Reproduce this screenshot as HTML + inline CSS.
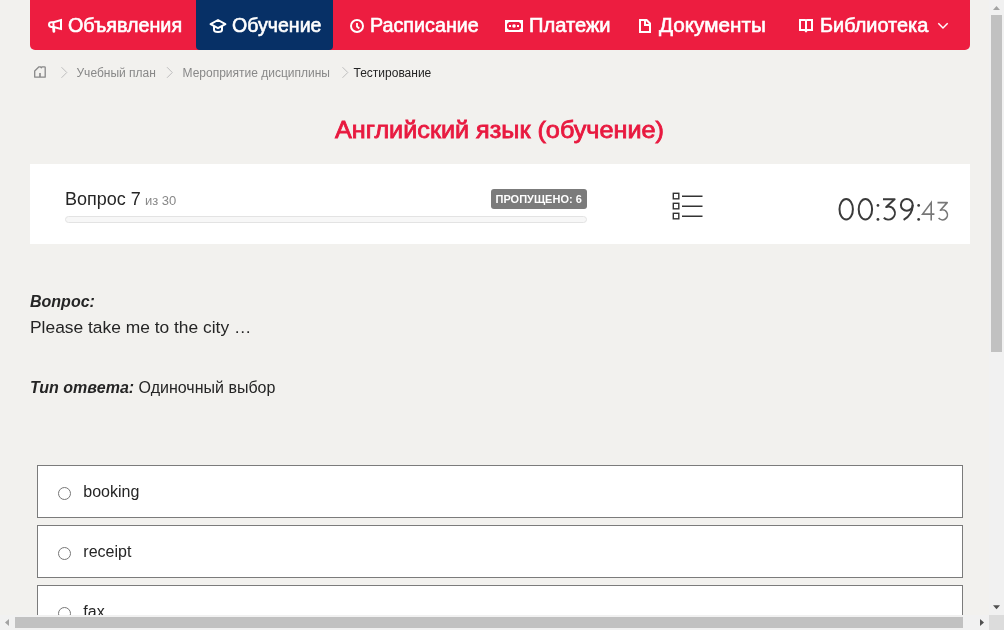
<!DOCTYPE html>
<html><head><meta charset="utf-8">
<style>
html,body{margin:0;padding:0;width:1004px;height:630px;overflow:hidden;background:#f2f1ee;}
body{position:relative;font-family:"Liberation Sans",sans-serif;color:#252525;}
.a{position:absolute;white-space:nowrap;line-height:1;}
#nav{position:absolute;left:30px;top:0;width:940px;height:50px;background:#ed1d40;border-radius:0 0 5px 5px;}
#act{position:absolute;left:196px;top:0;width:137px;height:50px;background:#073066;border-radius:0 0 4px 4px;}
.nt{font-size:20px;color:#fff;-webkit-text-stroke:0.6px #fff;transform-origin:0 0;top:15px;}
.bc{font-size:12px;color:#888;top:66.5px;}
#panel{position:absolute;left:30px;top:164px;width:940px;height:80px;background:#fff;}
.opt{position:absolute;left:37px;width:924px;height:51px;border:1px solid #7b7b7b;background:#fff;}
.radio{position:absolute;width:11px;height:11px;border:1px solid #767676;border-radius:50%;background:#fff;}
.ot{font-size:16px;color:#252525;}
svg{position:absolute;overflow:visible;}
</style></head><body><div style="position:absolute;left:0;top:0;width:1004px;height:630px;will-change:transform">

<div id="nav"></div>
<div id="act"></div>

<!-- nav icons -->
<svg style="left:0;top:0" width="1004" height="50" fill="none" stroke="#fff" stroke-width="2">
  <!-- megaphone -->
  <path d="M53.5 22.2 L61 20 L61 29 L53.5 27 Z"/>
  <path d="M53.5 22.2 L51.5 22.2 Q49 22.2 49 24.6 Q49 27 51.5 27 L53.5 27"/>
  <path d="M53.6 28 L53.9 31.4" stroke-width="2.8" stroke-linecap="round"/>
  <!-- grad cap -->
  <path d="M218 20 L210.6 24.2 L218 28.2 L225.4 24.2 Z" stroke-linejoin="round"/>
  <path d="M214 26 L214 30 Q214 32 218 32 Q222 32 222 30 L222 26"/>
  <!-- clock -->
  <circle cx="357" cy="26" r="6"/>
  <path d="M357 23 L357 26.5 L359.3 28.5" stroke-width="1.8"/>
  <!-- chevron -->
  <path d="M938.3 23.3 L943 28 L947.7 23.3" stroke-width="1.5"/>
</svg>
<svg style="left:0;top:0" width="1004" height="50" fill="#fff">
  <!-- money -->
  <path fill-rule="evenodd" d="M505 20 H523 V32 H505 Z M509 22 H519 L521 24 V28 L519 30 H509 L507 28 V24 Z"/>
  <circle cx="514" cy="26" r="1.8"/>
  <rect x="509" y="25" width="2" height="2"/>
  <rect x="517" y="25" width="2" height="2"/>
  <!-- doc -->
  <path fill-rule="evenodd" d="M639 19 H647 L651 23 V33 H639 Z M641 21 H644 V26 H649 V31 H641 Z M646 21 L649 24 H646 Z"/>
  <!-- book -->
  <path fill-rule="evenodd" d="M799 19 H805.5 L806 19.6 L806.5 19 H813 V31 H807.5 L806 32.8 L804.5 31 H799 Z M801 21 V29 H805 V21 Z M807 21 V29 H811 V21 Z"/>
</svg>

<div class="a nt" id="n1" style="left:68px;transform:scaleX(0.986)">Объявления</div>
<div class="a nt" id="n2" style="left:232px;transform:scaleX(0.978)">Обучение</div>
<div class="a nt" id="n3" style="left:370px;transform:scaleX(0.9865)">Расписание</div>
<div class="a nt" id="n4" style="left:528.8px;transform:scaleX(1.006)">Платежи</div>
<div class="a nt" id="n5" style="left:659px;transform:scaleX(1.036)">Документы</div>
<div class="a nt" id="n6" style="left:820px;transform:scaleX(0.995)">Библиотека</div>

<!-- breadcrumb -->
<svg style="left:0;top:0" width="1004" height="90" fill="none" stroke="#888" stroke-width="1.3">
  <path d="M34.7 77 V71 L39 66.8 H40.3 L41.3 67.7 L42.2 66.8 H44.5 Q45.2 66.8 45.2 67.5 V71 Q45.2 71.5 45.2 72 V77 Q45.2 77.2 45 77.2 H35 Q34.7 77.2 34.7 77 Z" stroke-linejoin="round"/>
  <path d="M40 73 V77" stroke-width="1.6"/>
</svg>
<svg style="left:0;top:0" width="1004" height="90" fill="none" stroke="#bdbdbd" stroke-width="1">
  <path d="M61.5 67.2 L66.8 72.5 L61.5 77.8"/>
  <path d="M167 67.2 L172.3 72.5 L167 77.8"/>
  <path d="M342.5 67.2 L347.8 72.5 L342.5 77.8"/>
</svg>
<div class="a bc" style="left:76.5px">Учебный план</div>
<div class="a bc" style="left:182.5px">Мероприятие дисциплины</div>
<div class="a bc" style="left:353.5px;color:#252525">Тестирование</div>

<!-- title -->
<div class="a" id="title" style="left:335px;top:118.8px;font-size:23.4px;color:#e8193f;-webkit-text-stroke:0.8px #e8193f;transform-origin:0 0;transform:scaleX(1.078)">Английский язык (обучение)</div>

<!-- panel -->
<div id="panel"></div>
<div class="a" style="left:65px;top:190.4px;font-size:18px;color:#252525">Вопрос 7</div>
<div class="a" style="left:145px;top:193.6px;font-size:13px;color:#888">из 30</div>
<div style="position:absolute;left:491px;top:189px;width:96px;height:20px;background:#7b7b7b;border-radius:3px;"></div>
<div class="a" style="left:495.5px;top:194.2px;font-size:11px;font-weight:bold;color:#fff">ПРОПУЩЕНО: 6</div>
<div style="position:absolute;left:65px;top:216px;width:520px;height:5px;background:#f7f7f7;border:1px solid #e3e3e3;border-radius:4px;"></div>

<svg style="left:0;top:0" width="1004" height="250" fill="none" stroke="#333" stroke-width="1.4">
  <rect x="673.3" y="193.3" width="5.5" height="5.5"/>
  <rect x="673.3" y="203.3" width="5.5" height="5.5"/>
  <rect x="673.3" y="213.3" width="5.5" height="5.5"/>
  <path d="M682 196.3 H702.5 M682 206.3 H702.5 M682 216.3 H702.5"/>
</svg>

<svg style="left:0;top:0" width="1004" height="250" fill="none" stroke="#3a3a3a" stroke-width="2">
  <ellipse cx="846.2" cy="209.25" rx="6.7" ry="10.35"/>
  <ellipse cx="865.4" cy="209.25" rx="6.7" ry="10.35"/>
  <path d="M883 199.2 H894.6 L886.2 207 A6.5 6.5 0 1 1 883.8 217.7" stroke-linejoin="round"/>
  <circle cx="906.8" cy="204.9" r="5.9"/>
  <path d="M912.7 205 Q912.5 215 903.6 219.9"/>
  <g fill="#3a3a3a" stroke="none">
    <circle cx="877.95" cy="205.45" r="1.35"/><circle cx="877.95" cy="219.4" r="1.4"/>
    <circle cx="918.65" cy="205.45" r="1.35"/><circle cx="918.65" cy="219.4" r="1.4"/>
  </g>
</svg>
<svg style="left:0;top:0" width="1004" height="250" fill="none" stroke="#777" stroke-width="1.6">
  <path d="M934.4 214.1 H922.6 L931.2 202.6 V220.6"/>
  <path d="M937.5 202.6 H947.2 L940.4 210.3 A5 5 0 1 1 938.6 218.1" stroke-linejoin="round"/>
</svg>

<!-- question -->
<div class="a" style="left:30px;top:293.5px;font-size:16px;font-weight:bold;font-style:italic;color:#252525">Воnрос:</div>
<div class="a" style="left:30px;top:318.6px;font-size:17.4px;color:#252525">Please take me to the city …</div>
<div class="a" style="left:30px;top:380.3px;font-size:16px;color:#252525"><b><i>Тиn omвema:</i></b> Одиночный выбор</div>

<!-- options -->
<div class="opt" style="top:465px"></div>
<div class="radio" style="left:58px;top:487px"></div>
<div class="a ot" style="left:83.3px;top:484px">booking</div>

<div class="opt" style="top:525px"></div>
<div class="radio" style="left:58px;top:547px"></div>
<div class="a ot" style="left:83.3px;top:544px">receipt</div>

<div class="opt" style="top:585px"></div>
<div class="radio" style="left:58px;top:607px"></div>
<div class="a ot" style="left:83.3px;top:604px">fax</div>

<!-- scrollbars -->
<div style="position:absolute;left:989px;top:0;width:15px;height:615px;background:#f1f1f1;"></div>
<div style="position:absolute;left:991px;top:15px;width:11px;height:337px;background:#c1c1c1;"></div>
<div style="position:absolute;left:0;top:615px;width:989px;height:15px;background:#f1f1f1;"></div>
<div style="position:absolute;left:15px;top:617px;width:948px;height:11px;background:#c1c1c1;"></div>
<div style="position:absolute;left:989px;top:615px;width:15px;height:15px;background:#dcdcdc;"></div>
<svg style="left:0;top:0" width="1004" height="630">
  <path d="M993 10 L996.5 6 L1000 10 Z" fill="#a3a3a3"/>
  <path d="M993 605.2 L996.5 609.2 L1000 605.2 Z" fill="#505050"/>
  <path d="M9 619 L5 622.5 L9 626 Z" fill="#a3a3a3"/>
  <path d="M980 619 L984 622.5 L980 626 Z" fill="#505050"/>
</svg>

</div></body></html>
